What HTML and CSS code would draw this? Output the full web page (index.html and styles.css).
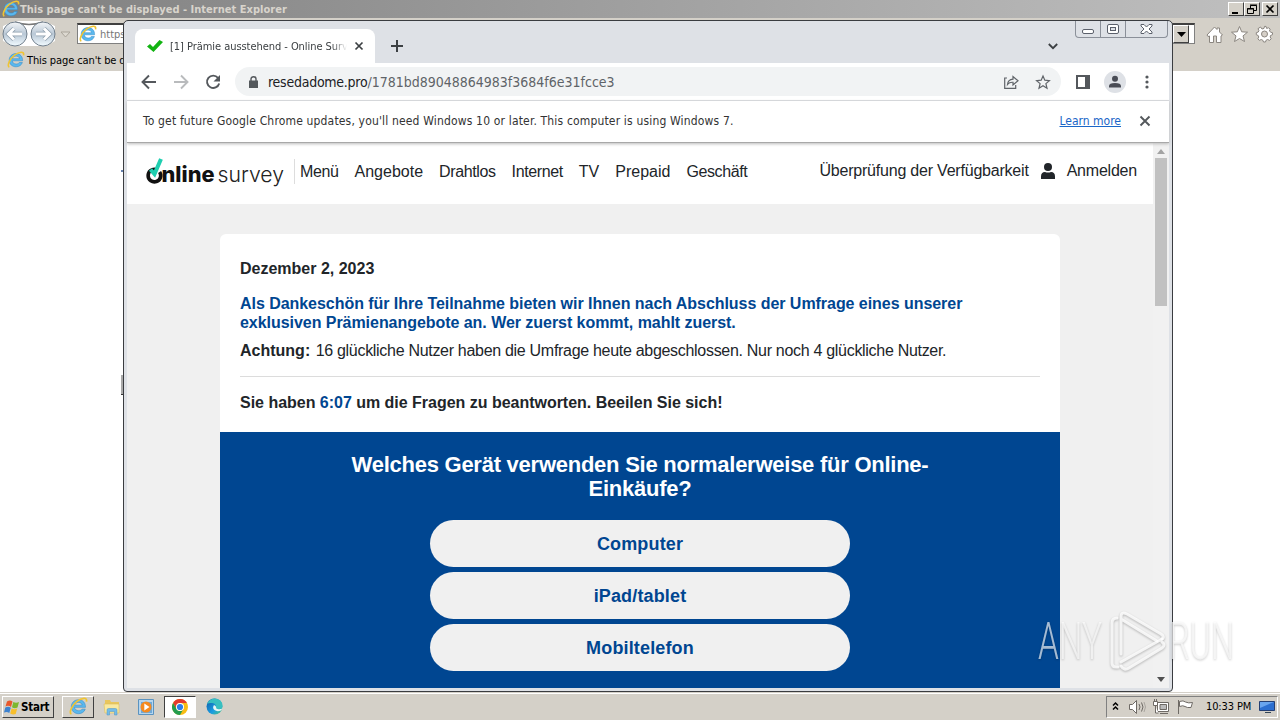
FILE: index.html
```html
<!DOCTYPE html>
<html lang="de">

<head>
  <meta charset="UTF-8" />
  <title>Online Survey</title>
  <link rel="stylesheet" href="styles.css">
</head>

<body>
  <svg class="defs">
    <defs>
      <linearGradient id="disc" x1="0" y1="0" x2="0" y2="1">
        <stop offset="0" stop-color="#f4f6f8" />
        <stop offset=".5" stop-color="#b9c8d6" />
        <stop offset="1" stop-color="#f2fbff" />
      </linearGradient>
      <linearGradient id="edge" x1="0" y1="0" x2="1" y2="1">
        <stop offset="0" stop-color="#0c59a4" />
        <stop offset=".6" stop-color="#1b9de2" />
        <stop offset="1" stop-color="#50c878" />
      </linearGradient>
      <symbol id="ie" viewBox="0 0 18 18">
        <path d="M15.6 9.8H5.2c.3 2 1.900 3.200 3.900 3.200 1.400 0 2.500-.5 3.200-1.500h3.100c-.9 2.700-3.300 4.300-6.300 4.300-4 0-6.900-2.700-6.900-6.600S5.100 2.600 9.100 2.600s6.700 2.900 6.500 7.200zM5.300 7.700h7.200c-.3-1.700-1.700-2.600-3.500-2.600S5.700 6.100 5.300 7.700z" fill="#5ab8ee" stroke="#2f87c6" stroke-width=".5" />
        <path d="M2.300 16.200C-.2 15 2.500 8 7.500 4.200 12 .8 17.600-.4 16.500 4.400" fill="none" stroke="#f0c432" stroke-width="1.600" />
      </symbol>
    </defs>
  </svg>

  <div class="desktop">
    <div class="ie">
      <div class="ie-title">
        <svg width="18" height="18"><use href="#ie" /></svg>
        <span class="ie-name">This page can't be displayed - Internet Explorer</span>
        <div class="ie-btns">
          <span class="cbtn"><svg width="12" height="12"><path d="M2 10h6" stroke="#000" stroke-width="2" /></svg></span>
          <span class="cbtn"><svg width="12" height="12"><path d="M4.500 5V2.500h6v5H8M1.500 5.500h6v5h-6zM4 2h7M1 6h7" fill="none" stroke="#000" /></svg></span>
          <span class="cbtn last"><svg width="12" height="12"><path d="M2.500 2.500l7 7m0-7l-7 7" stroke="#000" stroke-width="1.700" /></svg></span>
        </div>
      </div>
      <div class="ie-bar">
        <svg width="74" height="30" viewBox="0 0 74 30">
          <path d="M15 2h28l12 5v15l-9 5H14L3 22V7z" fill="#fff" />
          <path d="M15 3q14 5 28 0" fill="none" stroke="#777" stroke-width="1.500" />
          <circle cx="15" cy="15" r="12" fill="url(#disc)" stroke="#72808d" />
          <circle cx="43" cy="15" r="12" fill="url(#disc)" stroke="#72808d" />
          <path d="M22 15H9m5-5.500L8.500 15l5.500 5.500M36 15h13m-5-5.500l5.500 5.500-5.500 5.500" fill="none" stroke="#8e9eac" stroke-width="4.500" />
          <path d="M22 15H9m5-5.500L8.500 15l5.500 5.500M36 15h13m-5-5.500l5.500 5.500-5.500 5.500" fill="none" stroke="#fff" stroke-width="3" />
          <path d="M61 13h9l-4.500 5z" fill="#ddd9d1" stroke="#aaa59b" />
        </svg>
        <div class="ie-addr">
          <svg width="18" height="18"><use href="#ie" /></svg>
          <span>https</span>
          <div class="drop"><svg width="9" height="5"><path d="M0 0h9L4.500 5z" /></svg></div>
        </div>
        <svg class="ie-tools" width="70" height="24" viewBox="0 0 70 24" fill="#fff" stroke="#8b8680">
          <path d="M2 12l7.500-8L12 6.500V5h2.500v4l3 3-1.500 1v6.500h-4.500V13h-3v6.500H4.500V13L3 13.500z" />
          <path d="M34.500 3.500l2.200 5.300 5.800.4-4.500 3.700 1.500 5.600-5-3-5 3 1.500-5.600-4.500-3.700 5.800-.4z" />
          <g transform="translate(-2 0)">
            <path d="M57.500 4l1.500 2 2-.6.5-2h1.500l.6 2 2-.6 1.600 1.300-.8 2 1.600 1.200 1.500.4v2l-2 .8-.3 1.500 1 1.800-1.600 1.600-2-.9-1.500.7-.6 1.800h-2l-.7-1.800-1.600-.7-1.900.9-1.400-1.600.9-1.800-.6-1.500-1.900-.8v-2l2-.7.6-1.500-.9-1.800z" />
            <circle cx="61.500" cy="11" r="3" fill="#d6d0c8" />
          </g>
        </svg>
      </div>
      <div class="ie-tabs">
        <svg width="18" height="18"><use href="#ie" /></svg>
        <span>This page can't be displayed</span>
      </div>
      <div class="ie-page">
        <i class="speck one"></i>
        <i class="speck two"></i>
      </div>
    </div>

    <div class="taskbar">
      <div class="start">
        <svg width="17" height="16" viewBox="0 0 17 16">
          <path d="M3 2.500Q6 .5 8.500 2.500L7 8Q4.500 6 1.500 7.500z" fill="#e8582c" />
          <path d="M9.300 3Q12 4.500 15 3l-1.500 5.500Q10.500 10 8 8.300z" fill="#7db72f" />
          <path d="M1.300 8.500Q4.500 7 6.800 8.800L5.300 14Q3 12.300 0 13.500z" fill="#3d82cf" />
          <path d="M7.700 9.300Q10 11 13.200 9.500L11.700 15Q9 16 6.200 14.500z" fill="#f8bf2b" />
        </svg>
        <b>Start</b>
      </div>
      <div class="task raised"><svg width="19" height="19"><use href="#ie" /></svg></div>
      <div class="task">
        <svg width="18" height="18" viewBox="0 0 18 18">
          <path d="M2 2h5l1 2h8v11H2z" fill="#e9c65d" />
          <path d="M1 6h15v9H2z" fill="#f9e9a0" stroke="#dcbd5d" stroke-width=".6" />
          <path d="M4 17v-5q0-1.500 1.500-1.500h7q1.500 0 1.500 1.500v5h-2.500v-3.500h-5V17z" fill="#74bce8" stroke="#4c94c4" stroke-width=".5" />
        </svg>
      </div>
      <div class="task">
        <svg width="16" height="16" viewBox="0 0 16 16">
          <path d="M.5.5h15v15H.5z" fill="#b5d5ee" stroke="#5a93c0" />
          <path d="M3 3h11v11H3z" fill="#6fa9d8" />
          <circle cx="8" cy="8" r="5.500" fill="#f58a1f" />
          <path d="M6.300 4.500L11.500 8l-5.200 3.500z" fill="#fff" />
        </svg>
      </div>
      <div class="task pressed">
        <svg width="16" height="16" viewBox="0 0 16 16">
          <circle cx="8" cy="8" r="8" fill="#f8bc13" />
          <path d="M1.070 4A8 8 0 0 1 14.930 4H8a4 4 0 0 0-3.460 6z" fill="#e33b2e" />
          <path d="M1.070 4A8 8 0 0 0 8 16l3.460-6A4 4 0 0 1 4.540 10z" fill="#239d4f" />
          <circle cx="8" cy="8" r="4" fill="#fff" />
          <circle cx="8" cy="8" r="3.100" fill="#2b7de9" />
        </svg>
      </div>
      <div class="task">
        <svg width="17" height="17" viewBox="0 0 17 17">
          <circle cx="8.500" cy="8.500" r="8" fill="url(#edge)" />
          <path d="M1 6Q3.500.5 9 .5q7 .5 7.500 7 0 3.500-4 3.500-3 0-2.500-2 0-3.500-3.500-4Q3 4.500 1 6z" fill="#37bfc0" />
          <path d="M8 7q-2 3 .5 5t6.500.5l1.500-2q-2 1-4 .8-2.600-.3-2.400-1.700Q10.500 8 8 7z" fill="#e8f6f4" />
        </svg>
      </div>
      <div class="tray">
        <svg width="86" height="18" viewBox="0 0 86 18">
          <path d="M3 7.500L5.500 5 8 7.500M3 11.500L5.500 9 8 11.500" fill="none" stroke="#000" stroke-width="1.500" />
          <g fill="#fff" stroke="#6e6a65">
            <path d="M19.500 6.500h3l4-4v13l-4-4h-3z" />
            <path d="M29 6q2 3 0 6M31.500 4.500q3 4.500 0 9" fill="none" />
            <path d="M34 4q3 5 0 10" fill="none" stroke="#aaa6a0" />
            <path d="M47.500 4.500h11v9h-11z" />
            <path d="M50 6.500h6.500v5H50z" fill="#bbb" />
            <path d="M50 15.500h8M43.500 3.500h4v4h-4zM44.500 1v2M46.500 1v2M45.500 8v7h3" />
            <path d="M68.500 2v14M69.500 3.500q4-1.500 6 .5 3 1.500 7 .5l-1.500 5q-4 .5-6-1t-5.500 0z" />
          </g>
        </svg>
        <span class="clock">10:33 PM</span>
        <svg width="16" height="14" viewBox="0 0 16 14">
          <path d="M.5 1.500h15v9H.5z" fill="#2c6fd0" stroke="#243f73" />
          <path d="M1 2h14L1 8z" fill="#69a5ee" />
          <path d="M6 12.500h6" stroke="#345" />
        </svg>
      </div>
    </div>

    <div class="chrome">
      <div class="win-btns">
        <span class="wb"><svg width="13" height="6"><rect x=".5" y=".5" width="11" height="4" rx="1.500" fill="#fff" stroke="#5b606b" /></svg></span>
        <span class="wb"><svg width="12" height="10"><rect x=".5" y=".5" width="11" height="9" rx="1.500" fill="#fff" stroke="#5b606b" /><rect x="3.500" y="3.500" width="5" height="3" fill="#dee1e6" stroke="#5b606b" /></svg></span>
        <span class="wb wide"><svg width="13" height="10" viewBox="0 0 13 10"><path d="M1 .5h3l2.500 2.500L9 .5h3V2L9 5l3 3v1.500H9L6.500 7 4 9.500H1V8l3-3-3-3z" fill="#fff" stroke="#5b606b" /></svg></span>
      </div>
      <div class="tabstrip">
        <div class="tab">
          <svg width="16" height="14" viewBox="0 0 16 14"><path d="M0 7.500L3 5l3 3L12.500 1 16 3 6.500 13z" fill="#12b312" /></svg>
          <span class="tab-name">[1] Prämie ausstehend - Online Survey</span>
          <svg width="10" height="10"><path d="M1.500 1.500l7 7m0-7l-7 7" stroke="#3c4043" stroke-width="1.700" /></svg>
        </div>
        <svg class="plus" width="12" height="12"><path d="M6 0v12M0 6h12" stroke="#3c4043" stroke-width="2" /></svg>
        <svg class="chev" width="10" height="7"><path d="M.8 1L5 5.200 9.200 1" fill="none" stroke="#3c4043" stroke-width="1.800" /></svg>
      </div>

      <div class="toolbar">
        <svg width="80" height="16" viewBox="0 0 80 16" fill="none" stroke-width="1.900">
          <path d="M15 8H2m6-6.500L1.500 8 8 14.500" stroke="#54585c" />
          <path d="M33 8h13m-6-6.500L46.500 8 40 14.500" stroke="#b9bbbd" />
          <path d="M77 3.800A6.200 6.200 0 1 0 78.200 9.500" stroke="#54585c" />
          <path d="M79 1v6.500h-6.500z" fill="#54585c" />
        </svg>
        <div class="omnibox">
          <svg width="9" height="12" viewBox="0 0 9 12"><path d="M0 4.500h9V12H0z" fill="#54585c" /><path d="M2 5V3a2.500 2.300 0 0 1 5 0v2" fill="none" stroke="#54585c" stroke-width="1.400" /></svg>
          <span class="url"><em>resedadome.pro</em>/1781bd89048864983f3684f6e31fcce3</span>
          <svg width="50" height="16" viewBox="0 0 50 16" fill="none" stroke="#5f6368" stroke-width="1.200">
            <path d="M4 4H1.700v10.300h11V11M4.500 10.500Q5 5.500 10 5.200V2.500l5 4.300-5 4.200V8.300Q6.500 8 4.500 10.500z" />
            <path d="M40 2l1.800 4.200 4.600.4-3.500 3 1.100 4.600-4-2.500-4 2.500 1.100-4.600-3.500-3 4.600-.4z" />
          </svg>
        </div>
        <svg class="side" width="14" height="14"><path d="M1 1h12v12H1z" fill="none" stroke="#54585c" stroke-width="2" /><path d="M9 1h4v12H9z" fill="#54585c" /></svg>
        <svg class="avatar" width="22" height="22"><circle cx="11" cy="11" r="11" fill="#dee1e6" /><circle cx="11" cy="7.800" r="3" fill="#494c55" /><path d="M5 16.500v-1.500q0-3 6-3t6 3v1.500z" fill="#494c55" /></svg>
        <svg width="4" height="14" fill="#54585c"><circle cx="2" cy="2" r="1.600" /><circle cx="2" cy="7" r="1.600" /><circle cx="2" cy="12" r="1.600" /></svg>
      </div>

      <div class="infobar">
        <span class="info-text">To get future Google Chrome updates, you'll need Windows 10 or later. This computer is using Windows 7.</span>
        <a class="learn">Learn more</a>
        <svg width="12" height="12"><path d="M1.500 1.500l9 9m0-9l-9 9" stroke="#54585c" stroke-width="1.900" /></svg>
      </div>

      <div class="view">
        <div class="page">
          <div class="head">
            <svg class="logo" width="142" height="34" viewBox="0 0 142 34">
              <path d="M11 14.500A6.300 6.300 0 1 0 14.600 17" fill="none" stroke="#111" stroke-width="3.600" />
              <path d="M5.500 14.500l4 4.500L16 4" fill="none" stroke="#1fcfb0" stroke-width="4" />
              <text x="16.500" y="26.500" class="logo-bold" textLength="53" lengthAdjust="spacingAndGlyphs">nline</text>
              <text x="72.500" y="26.500" class="logo-thin" textLength="66.500" lengthAdjust="spacingAndGlyphs">survey</text>
            </svg>
            <div class="nav">
              <a class="tight">Menü</a>
              <a>Angebote</a>
              <a class="tight">Drahtlos</a>
              <a class="tight">Internet</a>
              <a>TV</a>
              <a>Prepaid</a>
              <a class="tight">Geschäft</a>
            </div>
            <div class="account">
              <span>Überprüfung der Verfügbarkeit</span>
              <svg width="14" height="16" fill="#212529"><circle cx="7" cy="4" r="4" /><path d="M0 16v-2.500q0-4.500 4-4.500 3 1 6 0 4 0 4 4.500V16z" /></svg>
              <span>Anmelden</span>
            </div>
          </div>

          <div class="card">
            <div class="intro">
              <b class="date">Dezember 2, 2023</b>
              <b class="offer">Als Dankeschön für Ihre Teilnahme bieten wir Ihnen nach Abschluss der Umfrage eines unserer<br>exklusiven Prämienangebote an. Wer zuerst kommt, mahlt zuerst.</b>
              <p class="note"><b>Achtung:</b> <span>16 glückliche Nutzer haben die Umfrage heute abgeschlossen. Nur noch 4 glückliche Nutzer.</span></p>
              <b class="timer">Sie haben <span>6:07</span> um die Fragen zu beantworten. Beeilen Sie sich!</b>
            </div>
            <div class="quiz">
              <h2>Welches Gerät verwenden Sie normalerweise für Online-<br>Einkäufe?</h2>
              <div class="answer">Computer</div>
              <div class="answer">iPad/tablet</div>
              <div class="answer">Mobiltelefon</div>
            </div>
          </div>
        </div>
        <div class="scroll">
          <svg width="8" height="5"><path d="M0 5h8L4 0z" fill="#a3a3a3" /></svg>
          <div class="thumb"></div>
          <svg width="8" height="5"><path d="M0 0h8L4 5z" fill="#505050" /></svg>
        </div>
      </div>
    </div>

    <svg class="mark" width="210" height="72" viewBox="0 0 210 72">
      <g class="mark-text">
        <text x="1" y="55" textLength="64" lengthAdjust="spacingAndGlyphs">ANY</text>
        <text x="132" y="55" textLength="65" lengthAdjust="spacingAndGlyphs">RUN</text>
      </g>
      <g class="mark-logo">
        <path d="M80 14q-5 0-5 5v40q0 4 4 4h2" />
        <path d="M120 37L84 15v35M84 17V13q0-6 6-3l34 20q4 3 1 5" />
        <path d="M84 58l41-23M84 62q3 5 8 2l33-20q4-3 0-6" />
      </g>
    </svg>
  </div>
</body>

</html>
```
FILE: styles.css
```css
* {
  padding: 0;
  margin: 0;
  box-sizing: border-box;
}

body {
  width: 1280px;
  height: 720px;
  overflow: hidden;
  font-family: "DejaVu Sans Condensed", "DejaVu Sans", sans-serif;
  font-size: 11px;
  color: #000;
}

svg {
  display: block;
  flex: none;
}

.defs {
  position: absolute;
  width: 0;
  height: 0;
}

.desktop {
  position: relative;
  width: 1280px;
  height: 720px;
  display: flex;
  flex-direction: column;
  white-space: nowrap;
}

/* Internet Explorer */
.ie {
  flex: 1;
  display: flex;
  flex-direction: column;
  background: #d4d0c8;
}

.ie-title {
  height: 18px;
  padding: 0 2px;
  display: flex;
  align-items: center;
  background: linear-gradient(90deg, #808080, #c0c0c0);
  color: #d8d4cc;
}

.ie-name {
  font-weight: bold;
  letter-spacing: 0.02px;
}

.ie-btns {
  margin-left: auto;
  display: flex;
}

.cbtn {
  width: 16px;
  height: 14px;
  padding: 0 1px;
  background: #d4d0c8;
  border: 1px solid;
  border-color: #fff #404040 #404040 #fff;
}

.cbtn.last {
  margin-left: 2px;
}

.ie-bar {
  height: 31px;
  display: flex;
  align-items: center;
}

.ie-addr {
  width: 1118px;
  height: 21px;
  margin-left: 3px;
  padding: 0 5px 0 1px;
  display: flex;
  align-items: center;
  gap: 3px;
  background: #fff;
  border: 1px solid #808080;
  border-top: 2px solid #404040;
  color: #777;
}

.drop {
  width: 16px;
  height: 18px;
  margin-left: auto;
  display: flex;
  align-items: center;
  justify-content: center;
  background: #d4d0c8;
  border: 1px solid;
  border-color: #fff #404040 #404040 #fff;
}

.ie-tools {
  margin-left: 10px;
  margin-top: 3px;
}

.ie-tabs {
  height: 22px;
  padding-left: 7px;
  display: flex;
  align-items: center;
  gap: 2px;
  letter-spacing: -0.1px;
}

.ie-page {
  flex: 1;
  position: relative;
  background: #fff;
}

.speck {
  position: absolute;
  left: 121px;
  width: 3px;
  background: #aaa;
}

.speck.one {
  top: 99px;
  height: 2px;
  background: #6682b0;
}

.speck.two {
  top: 304px;
  height: 20px;
  border-bottom: 1px solid #333;
}

/* Taskbar */
.taskbar {
  height: 28px;
  padding: 1px 2px 1px;
  display: flex;
  align-items: center;
  border-top: 1px solid #d4d0c8;
  box-shadow: inset 0 1px #fff;
  background: #d4d0c8;
}

.start {
  width: 52px;
  height: 22px;
  margin-right: 8px;
  padding-left: 1px;
  display: flex;
  align-items: center;
  border: 1px solid;
  border-color: #fff #404040 #404040 #fff;
  font-size: 11.5px;
}

.start b {
  letter-spacing: -0.25px;
}

.task {
  width: 32px;
  height: 22px;
  margin-right: 2px;
  display: flex;
  align-items: center;
  justify-content: center;
  border: 1px solid transparent;
}

.task.raised {
  border-color: #fff #404040 #404040 #fff;
}

.task.pressed {
  background: #fff;
  border-color: #404040 #fff #fff #404040;
}

.tray {
  width: 172px;
  height: 22px;
  margin-left: auto;
  padding: 0 2px 0 3px;
  display: flex;
  align-items: center;
  border: 1px solid;
  border-color: #808080 #fff #fff #808080;
}

.clock {
  margin-left: 10px;
  margin-right: auto;
  letter-spacing: -0.12px;
}

/* Chrome window */
.chrome {
  position: absolute;
  left: 123px;
  top: 20px;
  width: 1050px;
  height: 672px;
  padding: 0 3px 3px;
  display: flex;
  flex-direction: column;
  background: #dee1e6;
  border: 1px solid #3a3c40;
  border-radius: 5px 5px 4px 4px;
}

.win-btns {
  position: absolute;
  right: 4px;
  top: 0;
  height: 17px;
  display: flex;
  border: 1px solid #8b9099;
  border-top: 0;
  border-radius: 0 0 4px 4px;
}

.wb {
  width: 25px;
  display: flex;
  align-items: center;
  justify-content: center;
  border-right: 1px solid #8b9099;
}

.wb:first-child {
  padding-top: 5px;
}

.wb.wide {
  width: 41px;
  border: 0;
}

.tabstrip {
  height: 42px;
  padding: 8px 0 0 8px;
  display: flex;
  align-items: center;
}

.tab {
  width: 240px;
  height: 34px;
  padding: 0 11px 0 12px;
  display: flex;
  align-items: center;
  background: #fff;
  border-radius: 8px 8px 0 0;
  color: #3c4043;
}

.tab-name {
  width: 177px;
  margin-left: 7px;
  margin-right: auto;
  overflow: hidden;
  letter-spacing: -0.05px;
  -webkit-mask-image: linear-gradient(90deg, #000 162px, transparent);
}

.plus {
  margin-left: 16px;
}

.chev {
  margin-left: auto;
  margin-right: 111px;
}

.toolbar {
  height: 38px;
  padding: 0 20px 0 14px;
  display: flex;
  align-items: center;
  background: #fff;
  border-bottom: 1px solid #dadce0;
}

.omnibox {
  width: 826px;
  height: 29px;
  margin-left: 14px;
  padding: 0 8px 0 14px;
  display: flex;
  align-items: center;
  background: #f1f3f4;
  border-radius: 15px;
}

.url {
  margin-left: 10px;
  margin-right: auto;
  font-size: 14px;
  color: #5f6368;
}

.url em {
  font-style: normal;
  color: #202124;
  letter-spacing: -0.25px;
}

.side {
  margin-left: 15px;
}

.avatar {
  margin-left: 14px;
  margin-right: auto;
}

.infobar {
  position: relative;
  height: 42px;
  padding: 0 18px 2px 16px;
  display: flex;
  align-items: center;
  background: #fff;
  border-bottom: 1px solid #a8a8a8;
  box-shadow: 0 1px 3px #bbb;
  font-size: 12px;
  color: #333;
}

.info-text {
  letter-spacing: 0.165px;
}

.learn {
  margin-left: auto;
  margin-right: 18px;
  color: #1a66c8;
  text-decoration: underline;
}

.view {
  flex: 1;
  min-height: 0;
  display: flex;
}

/* Survey page */
.page {
  flex: 1;
  overflow: hidden;
  background: #f0f0f0;
  font-family: "Liberation Sans", Arial, sans-serif;
  font-size: 16px;
  line-height: 19px;
  color: #212529;
}

.head {
  height: 61px;
  padding: 0 16px 4px 18px;
  display: flex;
  align-items: center;
  background: #fff;
}

.logo {
  margin-top: 1px;
}

.logo-bold {
  font: 800 21px Inter, sans-serif;
  fill: #111;
}

.logo-thin {
  font: 300 22px Inter, sans-serif;
  fill: #222;
}

.nav {
  height: 25px;
  margin-left: 7px;
  padding-left: 5px;
  display: flex;
  align-items: center;
  gap: 16px;
  border-left: 1px solid #ddd;
}

.nav .tight {
  letter-spacing: -0.38px;
}

.account {
  margin-left: auto;
  padding-bottom: 2px;
  display: flex;
  align-items: center;
  gap: 12px;
  letter-spacing: -0.21px;
}

.card {
  width: 840px;
  margin: 30px 0 0 93px;
  background: #fff;
  border-radius: 6px 6px 0 0;
}

.intro {
  height: 198px;
  padding: 25px 20px 0;
}

.intro > b {
  display: block;
}

.offer {
  margin-top: 16px;
  color: #004691;
  letter-spacing: -0.045px;
}

.note {
  margin-top: 9px;
  padding-bottom: 16px;
  border-bottom: 1px solid #dcdcdc;
}

.note span {
  margin-left: 1px;
  letter-spacing: -0.3px;
}

.timer {
  margin-top: 16px;
  letter-spacing: -0.02px;
}

.timer span {
  color: #004691;
}

.quiz {
  height: 300px;
  padding-top: 21px;
  background: #004691;
  text-align: center;
}

.quiz h2 {
  margin-bottom: 19px;
  font-size: 22px;
  line-height: 24px;
  letter-spacing: -0.25px;
  color: #fff;
}

.answer {
  width: 420px;
  height: 47px;
  margin: 0 auto 5px;
  background: #f0f0f0;
  border-radius: 24px;
  font-size: 18px;
  font-weight: bold;
  line-height: 48px;
  letter-spacing: 0.15px;
  color: #004691;
}

.scroll {
  width: 16px;
  padding: 6px 1px;
  display: flex;
  flex-direction: column;
  align-items: center;
  background: #f1f1f1;
}

.thumb {
  width: 12px;
  height: 148px;
  margin-top: 4px;
  margin-bottom: auto;
  background: #c1c1c1;
}

/* Watermark */
.mark {
  position: absolute;
  left: 1037px;
  top: 604px;
  overflow: visible;
  filter: drop-shadow(0 1px 1px rgba(0, 0, 0, 0.3));
}

.mark-text {
  font: 300 51px Roboto, sans-serif;
  fill: #fff;
  fill-opacity: 0.65;
}

.mark-logo {
  fill: none;
  stroke: #fff;
  stroke-opacity: 0.8;
  stroke-width: 3;
  stroke-linecap: round;
  stroke-linejoin: round;
}
```
